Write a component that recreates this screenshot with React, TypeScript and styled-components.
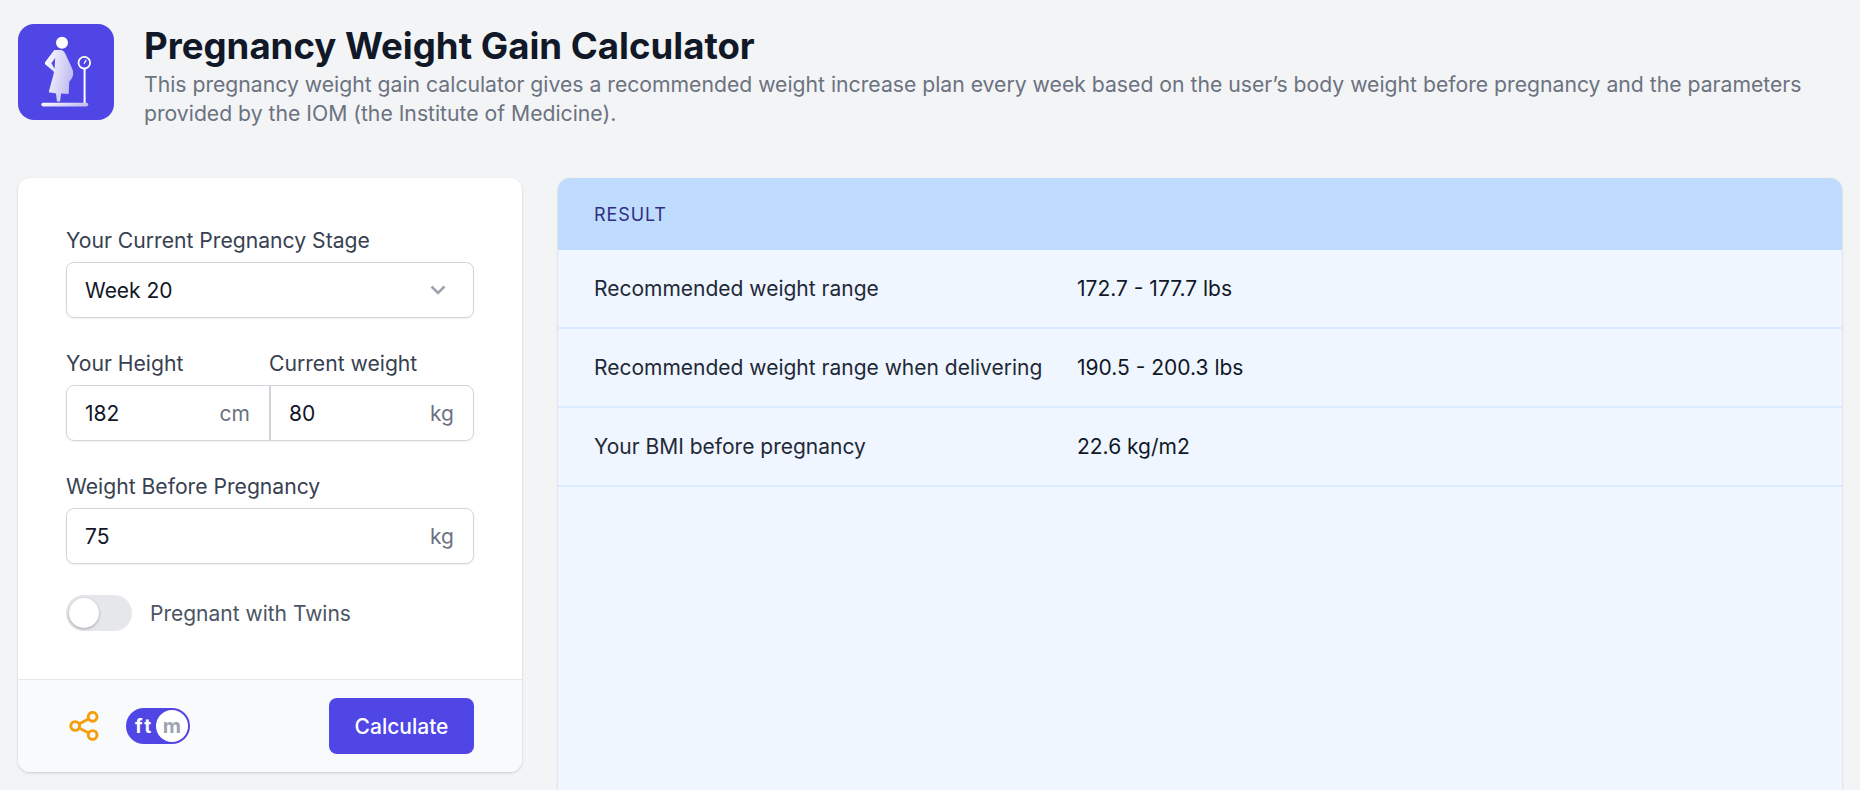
import styled, { createGlobalStyle } from "styled-components";

const GlobalStyle = createGlobalStyle`
  * {
    box-sizing: border-box;
  }
  html,
  body {
    margin: 0;
    height: 790px;
    overflow: hidden;
    background: #f3f4f6;
  }
  body {
    font-family: Inter, "Liberation Sans", sans-serif;
  }
`;

const rows = [
  { label: "Recommended weight range", value: "172.7 - 177.7 lbs" },
  { label: "Recommended weight range when delivering", value: "190.5 - 200.3 lbs" },
  { label: "Your BMI before pregnancy", value: "22.6 kg/m2" },
];

const LogoMark = () => (
  <svg width="96" height="96" viewBox="0 0 96 96" fill="none">
    <defs>
      <linearGradient id="body" x1="0" y1="0" x2="1" y2="0.3">
        <stop offset="0" stopColor="#ffffff" />
        <stop offset="1" stopColor="#c2bef1" />
      </linearGradient>
    </defs>
    <circle cx="44" cy="18.7" r="6" fill="#fff" />
    <path
      d="M36.3 26 L43 26 C45 26 47 28.5 48 31 C50 36 53 41 54.7 46 C56 50 55 54 51.3 57.7 L50.7 70 L43.2 69.6 L42 77.5 L39 77.5 L38 69.4 L30.7 68.3 L35.8 49.3 L35.8 47.5 L27.4 40.5 C26.7 39.8 26.7 38.8 27.2 38 Z M37.2 34 L33.4 39.3 L36.6 44.8 Z"
      fill="url(#body)"
      fillRule="evenodd"
    />
    <circle cx="66.3" cy="38.7" r="5.8" stroke="#fff" strokeWidth="1.8" />
    <path d="M66.3 39.2 L68 36.2" stroke="#fff" strokeWidth="1.3" strokeLinecap="round" />
    <path d="M65.6 44.5 H67.6 V79 H65.6 Z" fill="#fff" />
    <rect x="23.3" y="78.8" width="47" height="3.6" rx="1.8" fill="url(#body)" />
  </svg>
);

const ShareIcon = () => (
  <svg width="30" height="30" viewBox="0 0 30 30" fill="none" stroke="#f59e0b" strokeWidth="2.9">
    <circle cx="6.2" cy="15" r="4.4" />
    <circle cx="23.6" cy="5.8" r="4.4" />
    <circle cx="23.6" cy="24" r="4.4" />
    <path d="M10 13 L19.8 7.8 M10 17 L19.8 22" />
  </svg>
);

const Chevron = () => (
  <ChevronWrap width="16" height="10" viewBox="0 0 16 10" fill="none">
    <path d="M1.5 1.5 L8 8 L14.5 1.5" stroke="#9ca3af" strokeWidth="2.6" />
  </ChevronWrap>
);

export default function App() {
  return (
    <>
      <GlobalStyle />
      <Page>
        <Header>
          <Logo>
            <LogoMark />
          </Logo>
          <HeaderText>
            <Title>Pregnancy Weight Gain Calculator</Title>
            <Description>
              This pregnancy weight gain calculator gives a recommended weight increase plan every
              week based on the user’s body weight before pregnancy and the parameters provided by
              the IOM (the Institute of Medicine).
            </Description>
          </HeaderText>
        </Header>
        <Content>
          <FormCard>
            <FormBody>
              <Field>
                <Label>Your Current Pregnancy Stage</Label>
                <InputBox>
                  <Value>Week 20</Value>
                  <Chevron />
                </InputBox>
              </Field>
              <SplitLabels>
                <Label>Your Height</Label>
                <Label>Current weight</Label>
              </SplitLabels>
              <SplitBox>
                <SplitCell>
                  <Value>182</Value>
                  <Unit>cm</Unit>
                </SplitCell>
                <SplitCell $divided>
                  <Value>80</Value>
                  <Unit>kg</Unit>
                </SplitCell>
              </SplitBox>
              <Field>
                <Label>Weight Before Pregnancy</Label>
                <InputBox>
                  <Value>75</Value>
                  <Unit>kg</Unit>
                </InputBox>
              </Field>
              <TwinsRow>
                <Switch>
                  <Knob />
                </Switch>
                <TwinsLabel>Pregnant with Twins</TwinsLabel>
              </TwinsRow>
            </FormBody>
            <Footer>
              <FooterTools>
                <ShareIcon />
                <UnitToggle>
                  <UnitFt>ft</UnitFt>
                  <UnitM>m</UnitM>
                </UnitToggle>
              </FooterTools>
              <CalcButton>Calculate</CalcButton>
            </Footer>
          </FormCard>
          <ResultCard>
            <ResultHead>Result</ResultHead>
            {rows.map((row) => (
              <ResultRow key={row.label}>
                <RowLabel>{row.label}</RowLabel>
                <RowValue>{row.value}</RowValue>
              </ResultRow>
            ))}
          </ResultCard>
        </Content>
      </Page>
    </>
  );
}

const Page = styled.div`
  padding: 24px 18px 0;
`;

const Header = styled.header`
  display: flex;
  align-items: flex-start;
  gap: 30px;
`;

const Logo = styled.div`
  flex: none;
  width: 96px;
  height: 96px;
  border-radius: 16px;
  background: #4f46e5;
`;

const HeaderText = styled.div`
  flex: 1;
`;

const Title = styled.h1`
  margin: 0;
  font-size: 36.6px;
  line-height: 44px;
  font-weight: 700;
  color: #111827;
`;

const Description = styled.p`
  margin: 2px 0 0;
  font-size: 21.18px;
  line-height: 29px;
  color: #6b7280;
`;

const Content = styled.div`
  display: grid;
  grid-template-columns: 504px 1284px;
  gap: 36px;
  align-items: start;
  margin-top: 50px;
`;

const FormCard = styled.section`
  border-radius: 12px;
  background: #fff;
  overflow: hidden;
  box-shadow: 0 1px 3px rgba(0, 0, 0, 0.12), 0 1px 2px rgba(0, 0, 0, 0.06);
`;

const FormBody = styled.div`
  padding: 49px 48px 48px;
`;

const Field = styled.div`
  margin-bottom: 32px;
`;

const Label = styled.label`
  display: block;
  font-size: 21.15px;
  line-height: 28px;
  margin-bottom: 7px;
  color: #374151;
`;

const InputBox = styled.div`
  display: flex;
  align-items: center;
  justify-content: space-between;
  height: 56px;
  padding: 0 19px 0 18px;
  background: #fff;
  border: 1px solid #d1d5db;
  border-radius: 8px;
  box-shadow: 0 1px 2px rgba(0, 0, 0, 0.05);
`;

const ChevronWrap = styled.svg`
  margin-right: 8px;
`;

const SplitLabels = styled.div`
  display: grid;
  grid-template-columns: 203px 1fr;
`;

const SplitBox = styled.div`
  display: grid;
  grid-template-columns: 202px 1fr;
  height: 56px;
  margin-bottom: 32px;
  border: 1px solid #d1d5db;
  border-radius: 8px;
  box-shadow: 0 1px 2px rgba(0, 0, 0, 0.05);
`;

const SplitCell = styled.div<{ $divided?: boolean }>`
  display: flex;
  align-items: center;
  justify-content: space-between;
  padding: 0 19px 0 18px;
  border-left: ${(p) => (p.$divided ? "2px solid #d1d5db" : "none")};
`;

const Value = styled.span`
  font-size: 21px;
  color: #111827;
`;

const Unit = styled.span`
  font-size: 21px;
  color: #6b7280;
`;

const TwinsRow = styled.div`
  display: flex;
  align-items: center;
  gap: 18px;
  height: 36px;
  margin-top: -1px;
`;

const Switch = styled.div`
  display: flex;
  align-items: center;
  width: 66px;
  height: 36px;
  padding: 3px;
  border-radius: 18px;
  background: #e5e7eb;
`;

const Knob = styled.span`
  width: 30px;
  height: 30px;
  border-radius: 50%;
  background: #fff;
  box-shadow: 0 1px 3px rgba(0, 0, 0, 0.3);
`;

const TwinsLabel = styled.span`
  font-size: 21px;
  color: #4b5563;
`;

const Footer = styled.div`
  display: flex;
  align-items: center;
  justify-content: space-between;
  height: 93px;
  padding: 0 48px 0 51px;
  background: #f9fafb;
  border-top: 1px solid #e5e7eb;
`;

const FooterTools = styled.div`
  display: flex;
  align-items: center;
  gap: 27px;
`;

const UnitToggle = styled.div`
  display: flex;
  align-items: center;
  justify-content: space-between;
  width: 64px;
  height: 36px;
  padding: 0 2px 0 9px;
  border-radius: 18px;
  background: #4f46e5;
`;

const UnitFt = styled.span`
  font-size: 19px;
  font-weight: 700;
  color: #fff;
  letter-spacing: 2.5px;
`;

const UnitM = styled.span`
  display: flex;
  align-items: center;
  justify-content: center;
  width: 32px;
  height: 32px;
  border-radius: 50%;
  background: #fff;
  font-size: 20px;
  font-weight: 700;
  color: #9ca3af;
`;

const CalcButton = styled.button`
  width: 145px;
  height: 56px;
  border: none;
  border-radius: 8px;
  background: #4f46e5;
  color: #fff;
  font-family: inherit;
  font-size: 21px;
  font-weight: 500;
`;

const ResultCard = styled.section`
  height: 640px;
  border-radius: 12px 12px 0 0;
  background: #eff6ff;
  overflow: hidden;
  box-shadow: 0 1px 3px rgba(0, 0, 0, 0.12), 0 1px 2px rgba(0, 0, 0, 0.06);
`;

const ResultHead = styled.div`
  display: flex;
  align-items: center;
  height: 72px;
  padding: 0 36px;
  background: #bfdbfe;
  color: #312e81;
  font-size: 18px;
  letter-spacing: 0.9px;
  text-transform: uppercase;
`;

const ResultRow = styled.div`
  display: flex;
  align-items: center;
  height: 79px;
  padding: 0 36px;
  border-bottom: 2px solid #dbeafe;
  font-size: 21px;
  color: #1f2937;
`;

const RowLabel = styled.span`
  width: 483px;
`;

const RowValue = styled.span`
  color: #111827;
`;
